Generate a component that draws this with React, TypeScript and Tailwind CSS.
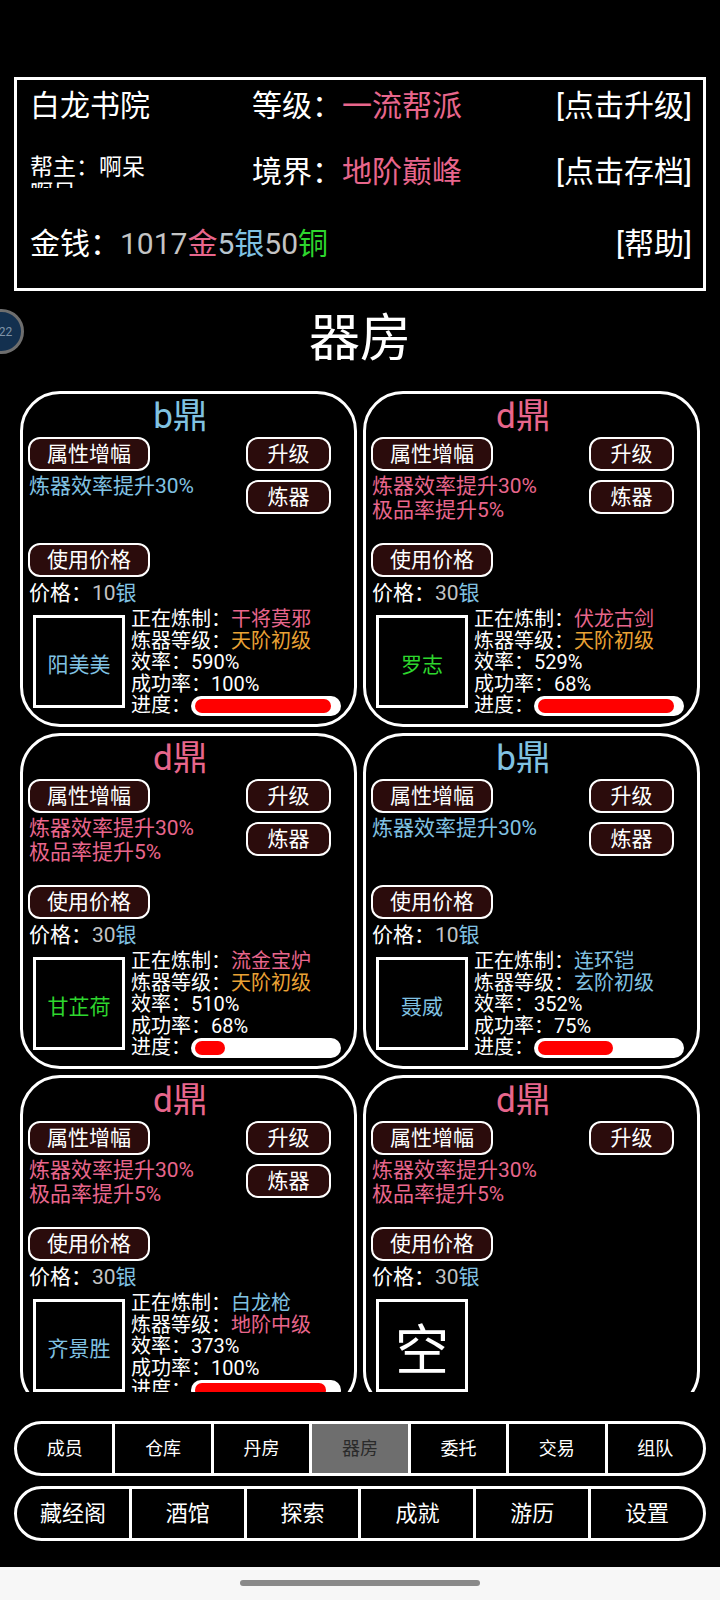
import React from "react";

const PINK = "text-[#e8668c]";
const BLUE = "text-[#80c2e2]";
const ORANGE = "text-[#eaa235]";
const GREEN = "text-[#2ed62e]";
const GRAY = "text-[#c4c4c4]";

type Furnace = {
  grade: "b" | "d";
  price: number;
  worker?: { name: string; color: string };
  making?: { name: string; color: string };
  level?: { name: string; color: string };
  eff?: string;
  rate?: string;
  progress?: number;
  canSmelt: boolean;
};

const furnaces: Furnace[] = [
  {
    grade: "b",
    price: 10,
    worker: { name: "阳美美", color: BLUE },
    making: { name: "干将莫邪", color: PINK },
    level: { name: "天阶初级", color: ORANGE },
    eff: "590%",
    rate: "100%",
    progress: 96,
    canSmelt: true,
  },
  {
    grade: "d",
    price: 30,
    worker: { name: "罗志", color: GREEN },
    making: { name: "伏龙古剑", color: PINK },
    level: { name: "天阶初级", color: ORANGE },
    eff: "529%",
    rate: "68%",
    progress: 96,
    canSmelt: true,
  },
  {
    grade: "d",
    price: 30,
    worker: { name: "甘芷荷", color: GREEN },
    making: { name: "流金宝炉", color: PINK },
    level: { name: "天阶初级", color: ORANGE },
    eff: "510%",
    rate: "68%",
    progress: 21,
    canSmelt: true,
  },
  {
    grade: "b",
    price: 10,
    worker: { name: "聂威", color: BLUE },
    making: { name: "连环铠", color: BLUE },
    level: { name: "玄阶初级", color: BLUE },
    eff: "352%",
    rate: "75%",
    progress: 53,
    canSmelt: true,
  },
  {
    grade: "d",
    price: 30,
    worker: { name: "齐景胜", color: BLUE },
    making: { name: "白龙枪", color: BLUE },
    level: { name: "地阶中级", color: PINK },
    eff: "373%",
    rate: "100%",
    progress: 92,
    canSmelt: true,
  },
  { grade: "d", price: 30, canSmelt: false },
];

const navTop = ["成员", "仓库", "丹房", "器房", "委托", "交易", "组队"];
const navBottom = ["藏经阁", "酒馆", "探索", "成就", "游历", "设置"];

function Btn({ label, wide }: { label: string; wide?: boolean }) {
  return (
    <div
      className={`${wide ? "w-[122px]" : "w-[85px]"} flex h-[34px] items-center justify-center rounded-[12px] border-[2.5px] border-white bg-[#2b0c0c] text-[21px] leading-none text-white`}
    >
      {label}
    </div>
  );
}

function FurnaceCard({ f }: { f: Furnace }) {
  const color = f.grade === "b" ? BLUE : PINK;
  const bonus =
    f.grade === "b" ? ["炼器效率提升30%"] : ["炼器效率提升30%", "极品率提升5%"];

  return (
    <div className="flex h-[336px] flex-col overflow-hidden rounded-[40px] border-[3px] border-white">
      <div className={`h-[43px] pr-[16px] pt-[3px] text-center text-[35px] leading-[40px] ${color}`}>
        {f.grade}鼎
      </div>

      <div className="flex h-[106px] pl-[5px] pr-[23px]">
        <div className="flex flex-col">
          <Btn label="属性增幅" wide />
          <div className={`mt-[3px] pl-[1px] text-[21px] leading-[24px] ${color}`}>
            {bonus.map((b) => (
              <div key={b}>{b}</div>
            ))}
          </div>
        </div>
        <div className="ml-auto flex flex-col gap-[9px]">
          <Btn label="升级" />
          {f.canSmelt && <Btn label="炼器" />}
        </div>
      </div>

      <div className="pl-[5px]">
        <Btn label="使用价格" wide />
        <div className="mt-[4px] pl-[1px] text-[21px] leading-[24px] text-white">
          价格：<span className={GRAY}>{f.price}</span>
          <span className={BLUE}>银</span>
        </div>
      </div>

      <div className="mt-[4px] flex pl-[10px] pr-[11px]">
        <div className="mt-[6px] flex h-[93px] w-[92px] shrink-0 items-center justify-center border-[3px] border-white">
          {f.worker ? (
            <span className={`pt-[8px] text-[21px] ${f.worker.color}`}>{f.worker.name}</span>
          ) : (
            <span className="pt-[12px] text-[54px] leading-none text-white">空</span>
          )}
        </div>
        {f.worker && (
          <div className="ml-[6px] flex flex-1 flex-col text-[20px] leading-[21.5px] text-white">
            <div>
              正在炼制：<span className={f.making!.color}>{f.making!.name}</span>
            </div>
            <div>
              炼器等级：<span className={f.level!.color}>{f.level!.name}</span>
            </div>
            <div>效率：{f.eff}</div>
            <div>成功率：{f.rate}</div>
            <div className="flex items-center">
              <span>进度：</span>
              <div className="h-[20px] w-[150px] rounded-full bg-white px-[4px] py-[3px]">
                <div
                  className="h-full rounded-full bg-[#ff0000]"
                  style={{ width: `${f.progress}%` }}
                />
              </div>
            </div>
          </div>
        )}
      </div>
    </div>
  );
}

export default function App() {
  return (
    <div className="relative flex h-[1600px] w-[720px] flex-col overflow-hidden bg-black pt-[77px] font-[Roboto,'Noto_Sans_CJK_SC',sans-serif] text-white">
      {/* header panel */}
      <div className="mx-[14px] flex h-[214px] flex-col border-[3px] border-white pb-[14px] pl-[13px] pr-[11px]">
        <div className="grid h-[51px] grid-cols-[222px_1fr_auto] items-center text-[30px] leading-none">
          <span>白龙书院</span>
          <span>
            等级：<span className={PINK}>一流帮派</span>
          </span>
          <span>[点击升级]</span>
        </div>
        <div className="grid h-[82px] grid-cols-[222px_1fr_auto] items-center text-[30px] leading-none">
          <div className="mb-[25px] h-[33px] w-[130px] self-end overflow-hidden text-[23px] leading-[26px]">
            帮主：啊呆啊呆
          </div>
          <span>
            境界：<span className={PINK}>地阶巅峰</span>
          </span>
          <span>[点击存档]</span>
        </div>
        <div className="flex h-[61px] items-center justify-between text-[30px] leading-none">
          <span>
            金钱：<span className={GRAY}>1017</span>
            <span className={PINK}>金</span>
            <span className="text-[#b9c6cf]">5</span>
            <span className={BLUE}>银</span>
            <span className={GRAY}>50</span>
            <span className={GREEN}>铜</span>
          </span>
          <span>[帮助]</span>
        </div>
      </div>

      {/* floating bubble */}
      <div className="absolute left-[-21px] top-[309px] flex h-[45px] w-[45px] items-center justify-center rounded-full border-[3px] border-[#6e6e6e] bg-[#13304f] pl-[8px] text-[12px] text-[#7f93a8]">
        22
      </div>

      {/* scroll area */}
      <div className="h-[1101px] overflow-hidden">
        <div className="flex h-[100px] items-center justify-center pb-[6px] text-[51px] leading-none">
          器房
        </div>
        <div className="ml-[20px] grid w-[680px] grid-cols-2 gap-x-[6px] gap-y-[6px]">
          {furnaces.map((f, i) => (
            <FurnaceCard key={i} f={f} />
          ))}
        </div>
      </div>

      {/* nav bars */}
      <div className="mx-[14px] mt-[29px] flex h-[55px] overflow-hidden rounded-full border-[3px] border-white">
        {navTop.map((n, i) => (
          <div
            key={n}
            className={`flex flex-1 items-center justify-center text-[18px] ${i > 0 ? "border-l-[3px] border-white" : ""} ${n === "器房" ? "bg-[#6e6e6e] text-[#2a2a2a]" : "text-white"}`}
          >
            {n}
          </div>
        ))}
      </div>
      <div className="mx-[14px] mt-[10px] flex h-[55px] overflow-hidden rounded-full border-[3px] border-white">
        {navBottom.map((n, i) => (
          <div
            key={n}
            className={`flex flex-1 items-center justify-center text-[22px] text-white ${i > 0 ? "border-l-[3px] border-white" : ""}`}
          >
            {n}
          </div>
        ))}
      </div>

      <div className="mt-auto flex h-[33px] items-start justify-center bg-[#f7f7f7] pt-[13px]">
        <div className="h-[6px] w-[240px] rounded-full bg-[#8a8a8a]" />
      </div>
    </div>
  );
}
